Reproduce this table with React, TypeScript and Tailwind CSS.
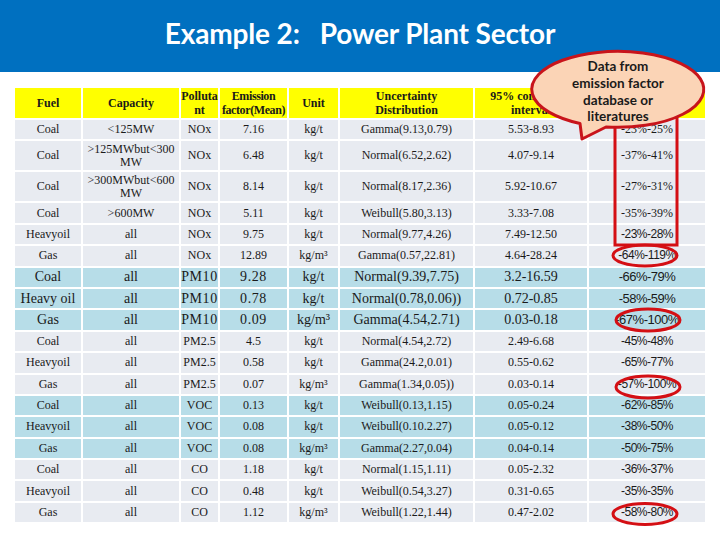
import React from "react";

type Row = {
	cells: string[];
	kind: "nox" | "pm10" | "pm25" | "voc" | "co";
	tall?: boolean;
};

const rows: Row[] = [
	{ kind: "nox", cells: ["Coal", "<125MW", "NOx", "7.16", "kg/t", "Gamma(9.13,0.79)", "5.53-8.93", "-23%-25%"] },
	{ kind: "nox", tall: true, cells: ["Coal", ">125MWbut<300 MW", "NOx", "6.48", "kg/t", "Normal(6.52,2.62)", "4.07-9.14", "-37%-41%"] },
	{ kind: "nox", tall: true, cells: ["Coal", ">300MWbut<600 MW", "NOx", "8.14", "kg/t", "Normal(8.17,2.36)", "5.92-10.67", "-27%-31%"] },
	{ kind: "nox", cells: ["Coal", ">600MW", "NOx", "5.11", "kg/t", "Weibull(5.80,3.13)", "3.33-7.08", "-35%-39%"] },
	{ kind: "nox", cells: ["Heavy oil", "all", "NOx", "9.75", "kg/t", "Normal(9.77,4.26)", "7.49-12.50", "-23%-28%"] },
	{ kind: "nox", cells: ["Gas", "all", "NOx", "12.89", "kg/m³", "Gamma(0.57,22.81)", "4.64-28.24", "-64%-119%"] },
	{ kind: "pm10", cells: ["Coal", "all", "PM10", "9.28", "kg/t", "Normal(9.39,7.75)", "3.2-16.59", "-66%-79%"] },
	{ kind: "pm10", cells: ["Heavy oil", "all", "PM10", "0.78", "kg/t", "Normal(0.78,0.06))", "0.72-0.85", "-58%-59%"] },
	{ kind: "pm10", cells: ["Gas", "all", "PM10", "0.09", "kg/m³", "Gamma(4.54,2.71)", "0.03-0.18", "-67%-100%"] },
	{ kind: "pm25", cells: ["Coal", "all", "PM2.5", "4.5", "kg/t", "Normal(4.54,2.72)", "2.49-6.68", "-45%-48%"] },
	{ kind: "pm25", cells: ["Heavy oil", "all", "PM2.5", "0.58", "kg/t", "Gamma(24.2,0.01)", "0.55-0.62", "-65%-77%"] },
	{ kind: "pm25", cells: ["Gas", "all", "PM2.5", "0.07", "kg/m³", "Gamma(1.34,0.05))", "0.03-0.14", "-57%-100%"] },
	{ kind: "voc", cells: ["Coal", "all", "VOC", "0.13", "kg/t", "Weibull(0.13,1.15)", "0.05-0.24", "-62%-85%"] },
	{ kind: "voc", cells: ["Heavy oil", "all", "VOC", "0.08", "kg/t", "Weibull(0.10.2.27)", "0.05-0.12", "-38%-50%"] },
	{ kind: "voc", cells: ["Gas", "all", "VOC", "0.08", "kg/m³", "Gamma(2.27,0.04)", "0.04-0.14", "-50%-75%"] },
	{ kind: "co", cells: ["Coal", "all", "CO", "1.18", "kg/t", "Normal(1.15,1.11)", "0.05-2.32", "-36%-37%"] },
	{ kind: "co", cells: ["Heavy oil", "all", "CO", "0.48", "kg/t", "Weibull(0.54,3.27)", "0.31-0.65", "-35%-35%"] },
	{ kind: "co", cells: ["Gas", "all", "CO", "1.12", "kg/m³", "Weibull(1.22,1.44)", "0.47-2.02", "-58%-80%"] },
];

const widths = ["w-[66px]", "w-[96px]", "w-[37px]", "w-[67px]", "w-[49px]", "w-[133px]", "w-[112px]", "w-[116px]"];

const serif = "font-['Liberation_Serif','Times_New_Roman',serif]";
const sans = "font-['Liberation_Sans',Arial,sans-serif]";

const App: React.FC = () => {
	return (
		<div className="relative w-[720px] h-[540px] bg-white overflow-hidden">
			<div className="h-[72px] bg-[#0070c0] flex items-center justify-center pb-[6px]">
				<h1 className="text-white font-['Lato',sans-serif] font-bold text-[28px] tracking-[-0.15px] whitespace-pre">
					Example 2:   Power Plant Sector
				</h1>
			</div>

			<table
				className={`ml-[13px] mt-[14px] border-separate border-spacing-[2px] table-fixed text-[#1a1a1a] ${serif}`}
			>
				<colgroup>
					{widths.map((w, i) => (
						<col key={i} className={w} />
					))}
				</colgroup>
				<thead>
					<tr className="h-[30px] bg-[#ffff00] text-[12px] font-bold leading-[14px] text-center">
						<th className="p-0">Fuel</th>
						<th className="p-0">Capacity</th>
						<th className="p-0">
							Polluta
							<br />
							nt
						</th>
						<th className="p-0 whitespace-nowrap tracking-[-0.4px]">
							Emission
							<br />
							factor(Mean)
						</th>
						<th className="p-0">Unit</th>
						<th className="p-0">
							Uncertainty
							<br />
							Distribution
						</th>
						<th className="p-0">
							95% confidence
							<br />
							interval
						</th>
						<th className="p-0"></th>
					</tr>
				</thead>
				<tbody>
					{rows.map((r, i) => {
						const blue = r.kind === "pm10" || r.kind === "voc";
						const big = r.kind === "pm10";
						return (
							<tr
								key={i}
								className={`${r.tall ? "h-[29px]" : "h-[19.4px]"} ${
									blue ? "bg-[#b7dde8]" : "bg-[#e8ebf1]"
								} text-center`}
							>
								{r.cells.map((c, j) => {
									const pct = j === 7 && i >= 4;
									let size = big ? "text-[14px] leading-[16px]" : "text-[12px] leading-[13px]";
									if (pct && big) size = "text-[13px] leading-[16px]";
									return (
										<td
											key={j}
											className={`p-0 ${size} ${pct ? `${sans} tracking-[-0.5px]` : ""} ${
												big && (j === 2 || j === 3) ? "tracking-[0.6px]" : ""
											} ${c === "Heavy oil" && !big ? "[word-spacing:-3px]" : ""}`}
										>
											{c}
										</td>
									);
								})}
							</tr>
						);
					})}
				</tbody>
			</table>

			<svg
				className="absolute left-0 top-0 pointer-events-none"
				width="720"
				height="540"
				viewBox="0 0 720 540"
			>
				<g fill="none" stroke="#d40f14" strokeWidth="3">
					<rect x="615" y="100" width="62" height="145" />
					<ellipse cx="645" cy="255.5" rx="32" ry="10.5" />
					<ellipse cx="648" cy="320" rx="32" ry="11" />
					<ellipse cx="648" cy="387" rx="32" ry="11" />
					<ellipse cx="645" cy="514" rx="32" ry="10.5" />
				</g>
				<path
					d="M 606 127 A 86 38 0 1 0 580 123.5 L 582 139 Z"
					fill="#fbd4b6"
					stroke="#c8141b"
					strokeWidth="3"
					strokeLinejoin="round"
				/>
			</svg>

			<div className="absolute left-[548px] top-[58px] w-[140px] text-center font-['Lato',sans-serif] font-bold text-[13.5px] leading-[16.8px] text-[#1a1a1a]">
				Data from
				<br />
				emission factor
				<br />
				database or
				<br />
				literatures
			</div>
		</div>
	);
};

export default App;
